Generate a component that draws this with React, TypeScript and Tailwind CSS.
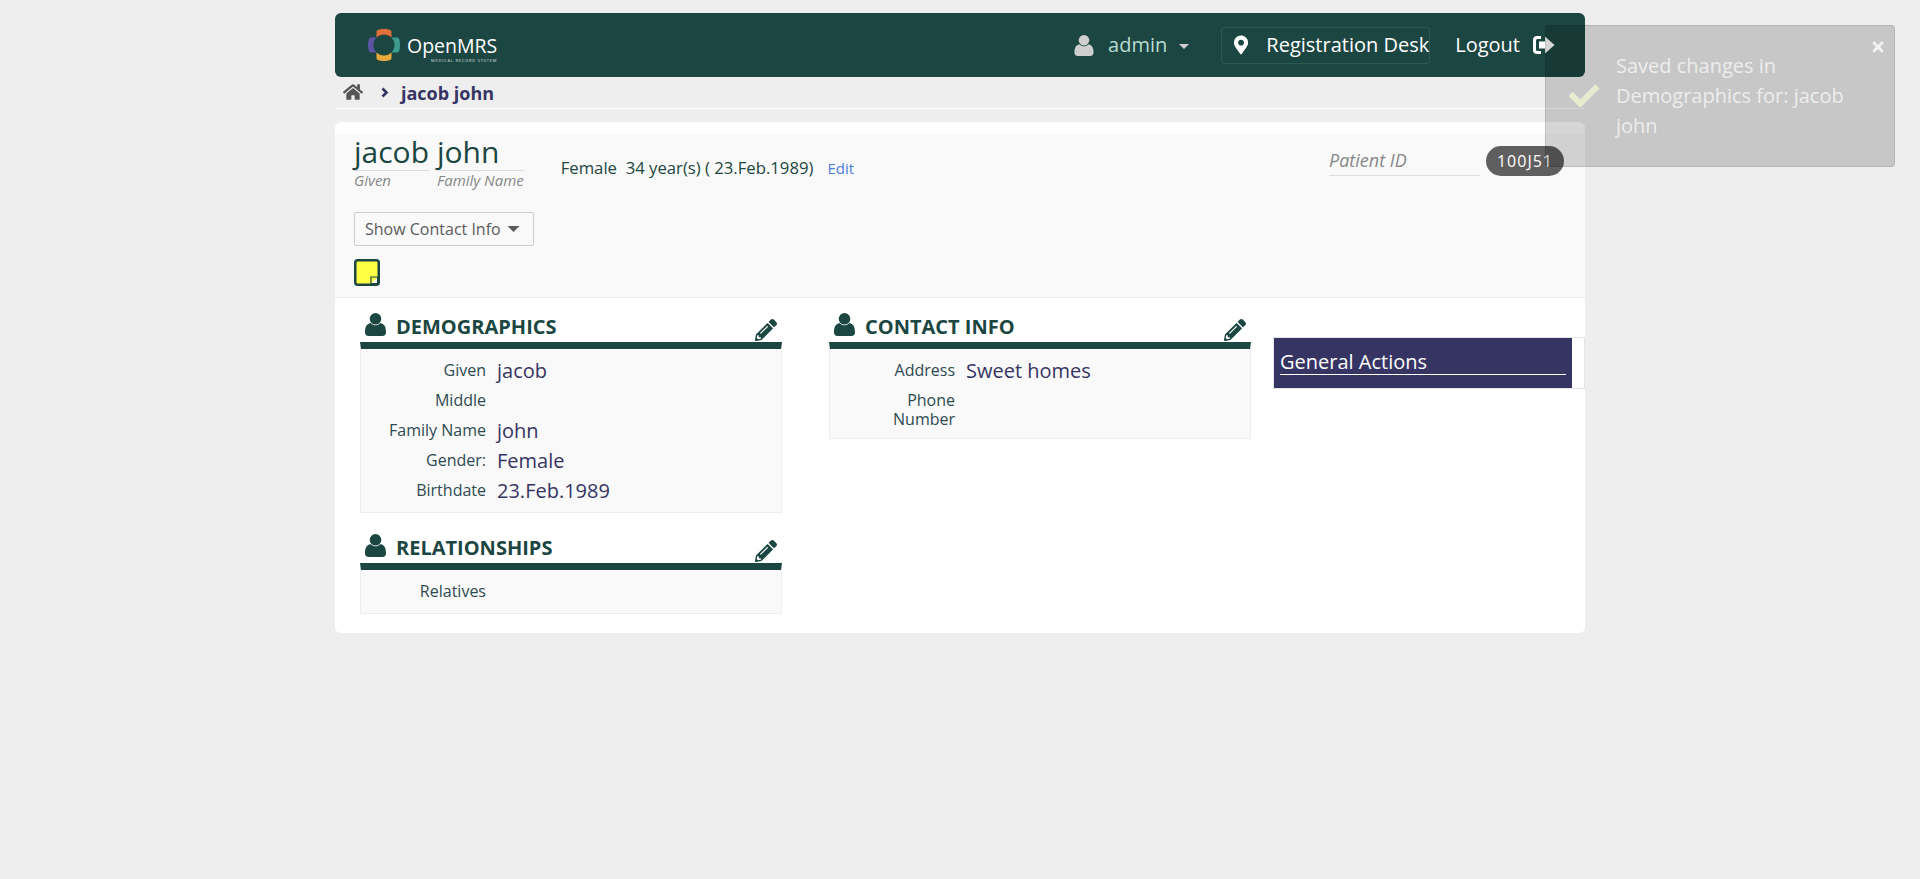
import { FaPencilAlt, FaHome, FaMapMarkerAlt, FaCheck, FaTimes } from "react-icons/fa";

function UserIcon({ className }: { className?: string }) {
  return (
    <svg viewBox="0 0 21 23" className={className} fill="currentColor">
      <circle cx="10.500" cy="5.800" r="5.800" />
      <path d="M0 19.500c0-5.500 1.500-8.500 5.500-9.500 1.500 1.500 3.200 2.300 5 2.300s3.500-.8 5-2.300c4 1 5.500 4 5.500 9.500 0 2.200-1.500 3.500-3.500 3.500h-14C1.500 23 0 21.700 0 19.500z" />
    </svg>
  );
}

function Caret({ className }: { className?: string }) {
  return (
    <svg viewBox="0 0 12 6" className={className} fill="currentColor">
      <path d="M0 0h12L6 6z" />
    </svg>
  );
}

function LogoutIcon({ className }: { className?: string }) {
  return (
    <svg viewBox="0 0 22 20" className={className} fill="currentColor">
      <path d="M8 1H4a4 4 0 0 0-4 4v10a4 4 0 0 0 4 4h4v-3H4.500a1.500 1.500 0 0 1-1.500-1.500v-9A1.500 1.500 0 0 1 4.500 4H8z" />
      <path d="M6 6.500h6V1.500L21.500 10 12 18.500v-5H6z" />
    </svg>
  );
}

function NoteIcon({ className }: { className?: string }) {
  return (
    <svg viewBox="0 0 26 27" className={className}>
      <rect x="1.250" y="1.250" width="23.500" height="24.500" rx="2.500" fill="#ffff44" stroke="#1c4642" strokeWidth="2.500" />
      <path d="M17 24.500V18h6.500v6.500z" fill="#ffff44" stroke="#1c4642" strokeWidth="1.200" />
      <path d="M18 24l5-5v5z" fill="#f9f9f9" />
    </svg>
  );
}

const petal = "M9.500 9.500V4C9.500 2 12 1 17 1s7.500 1 7.500 3v5.500A10.600 10.600 0 0 0 9.500 9.500z";

function Logo() {
  return (
    <div className="flex items-center">
      <svg viewBox="0 0 34 34" className="h-[34px] w-[34px]">
        <path d={petal} fill="#e2703a" />
        <path d={petal} fill="#3d9c8c" transform="rotate(90 17 17)" />
        <path d={petal} fill="#e9aa3b" transform="rotate(180 17 17)" />
        <path d={petal} fill="#5b54a3" transform="rotate(270 17 17)" />
      </svg>
      <div className="ml-[6px] mt-[6px] flex flex-col items-end">
        <span className="text-[19.500px] leading-[24px] text-white">OpenMRS</span>
        <span className="text-[4px] leading-[5px] tracking-[0.8px] text-white/80">MEDICAL RECORD SYSTEM</span>
      </div>
    </div>
  );
}

function Section({ title, rows }: { title: string; rows: [string, string][] }) {
  return (
    <section>
      <div className="flex h-[42px] items-end justify-between px-[5px] text-[#1c4642]">
        <div className="flex items-end">
          <UserIcon className="mb-[6px] h-[23px] w-[21px]" />
          <h3 className="ml-[10px] text-[20px] font-bold uppercase leading-[30px]">{title}</h3>
        </div>
        <FaPencilAlt className="mb-[1px] h-[22px] w-[22px]" />
      </div>
      <div className="border-x border-b border-t-[7px] border-[#eeeeee] border-t-[#1c4642] bg-[#f9f9f9] pb-[6px] pt-[7px]">
        {rows.map(([label, value]) => (
          <div key={label} className="flex min-h-[30px]">
            <div className="w-[125px] whitespace-pre-line pb-[3px] pt-[5px] text-right text-[16px] leading-[19px] text-[#2e4a50]">{label}</div>
            <div className="ml-[11px] text-[20px] leading-[30px] text-[#363463]">{value}</div>
          </div>
        ))}
      </div>
    </section>
  );
}

export default function App() {
  return (
    <div className="relative min-h-[879px] bg-[#eeeeee] font-['Open_Sans',sans-serif] text-[#1c4642]">
      <div className="mx-auto w-[1250px] pt-[13px]">
        <header className="flex h-[64px] items-center justify-between rounded-[6px] bg-[#1c4642] pl-[32px] pr-[30px]">
          <Logo />
          <div className="flex items-center">
            <UserIcon className="h-[21px] w-[20px] text-[#cfcfcf]" />
            <span className="ml-[14px] text-[20px] text-[#b9dcd2]">admin</span>
            <Caret className="ml-[12px] mt-[3px] h-[5px] w-[10px] text-[#cfcfcf]" />
            <div className="ml-[32px] flex h-[37px] w-[209px] items-center rounded-[3px] border border-[#2a5a52] pl-[12px] text-white">
              <FaMapMarkerAlt className="h-[20px] w-[15px]" />
              <span className="ml-[18px] whitespace-nowrap text-[20px]">Registration Desk</span>
            </div>
            <span className="ml-[25px] text-[20px] text-white">Logout</span>
            <LogoutIcon className="ml-[13px] h-[20px] w-[22px] text-white" />
          </div>
        </header>
        <nav className="flex h-[32px] items-center border-b border-white pl-[8px]">
          <FaHome className="mb-[2px] h-[20px] w-[20px] text-[#555555]" />
          <svg viewBox="0 0 8 11" className="ml-[18px] h-[11px] w-[8px] text-[#363463]" fill="none" stroke="currentColor" strokeWidth="2.600">
            <path d="M1.500 1.500l4 4-4 4" />
          </svg>
          <span className="ml-[12px] mt-[2px] text-[18px] font-bold text-[#363463]">jacob john</span>
        </nav>
        <main className="mt-[13px] h-[511px] rounded-[6px] bg-white pt-[12px]">
          <div className="h-[164px] border-b border-[#eeeeee] bg-[#f9f9f9] px-[19px]">
            <div className="flex justify-between">
              <div className="flex items-start">
                <div className="flex">
                  <div className="w-[75px]">
                    <div className="h-[37px] whitespace-nowrap border-b border-[#dddddd] text-[30px] leading-[36px]">jacob</div>
                    <div className="mt-[-1px] text-[15px] italic leading-[20px] text-[#888888]">Given</div>
                  </div>
                  <div className="ml-[8px]">
                    <div className="h-[37px] border-b border-[#dddddd] text-[30px] leading-[36px]">john</div>
                    <div className="mt-[-1px] text-[15px] italic leading-[20px] text-[#888888]">Family Name</div>
                  </div>
                </div>
                <div className="ml-[37px] mt-[21px] text-[16.700px]">Female&nbsp; 34 year(s) ( 23.Feb.1989)</div>
                <div className="ml-[14px] mt-[23px] text-[15px] text-[#4a7fdb]">Edit</div>
              </div>
              <div className="mr-[2px] mt-[13px] flex items-start">
                <div className="h-[29px] w-[151px] border-b border-[#dddddd] text-[18px] italic leading-[27px] text-[#888888]">Patient ID</div>
                <div className="ml-[6px] mt-[-1px] flex h-[30px] w-[78px] items-center justify-center rounded-full bg-[#5f5f5f] text-[16px] tracking-[1px] text-white">100J51</div>
              </div>
            </div>
            <button className="mt-[22px] flex h-[34px] w-[180px] items-center rounded-[2px] border border-[#cccccc] pl-[10px] text-[16px] text-[#5b5b5b]">
              Show Contact Info
              <Caret className="ml-[6px] h-[6px] w-[13px] text-[#5b5b5b]" />
            </button>
            <NoteIcon className="mt-[13px] h-[27px] w-[26px]" />
          </div>
          <div className="flex pl-[25px] pt-[2px]">
            <div className="w-[422px] shrink-0">
              <Section
                title="Demographics"
                rows={[
                  ["Given", "jacob"],
                  ["Middle", ""],
                  ["Family Name", "john"],
                  ["Gender:", "Female"],
                  ["Birthdate", "23.Feb.1989"],
                ]}
              />
              <div className="mt-[8px]">
                <Section title="Relationships" rows={[["Relatives", ""]]} />
              </div>
            </div>
            <div className="ml-[47px] w-[422px] shrink-0">
              <Section
                title="Contact Info"
                rows={[
                  ["Address", "Sweet homes"],
                  ["Phone\nNumber", ""],
                ]}
              />
            </div>
            <aside className="ml-[22px] mt-[37px] h-[52px] w-[312px] shrink-0 border border-[#e5e5e5] pr-[12px]">
              <div className="h-full bg-[#363463] px-[6px] pt-[11px]">
                <div className="border-b border-white text-[20px] leading-[25px] text-white">General Actions</div>
              </div>
            </aside>
          </div>
        </main>
      </div>
      <div className="absolute left-[1545px] top-[25px] flex h-[142px] w-[350px] items-center rounded-[4px] border border-black/10 bg-black/[0.16] pl-[23px] pr-[40px] text-[20px] leading-[30px] text-white/70">
        <FaCheck className="h-[30px] w-[30px] shrink-0 text-[#e6ecd0]" />
        <div className="ml-[17px]">Saved changes in Demographics for: jacob john</div>
        <FaTimes className="absolute right-[8px] top-[13px] h-[16px] w-[16px] text-white/80" />
      </div>
    </div>
  );
}
